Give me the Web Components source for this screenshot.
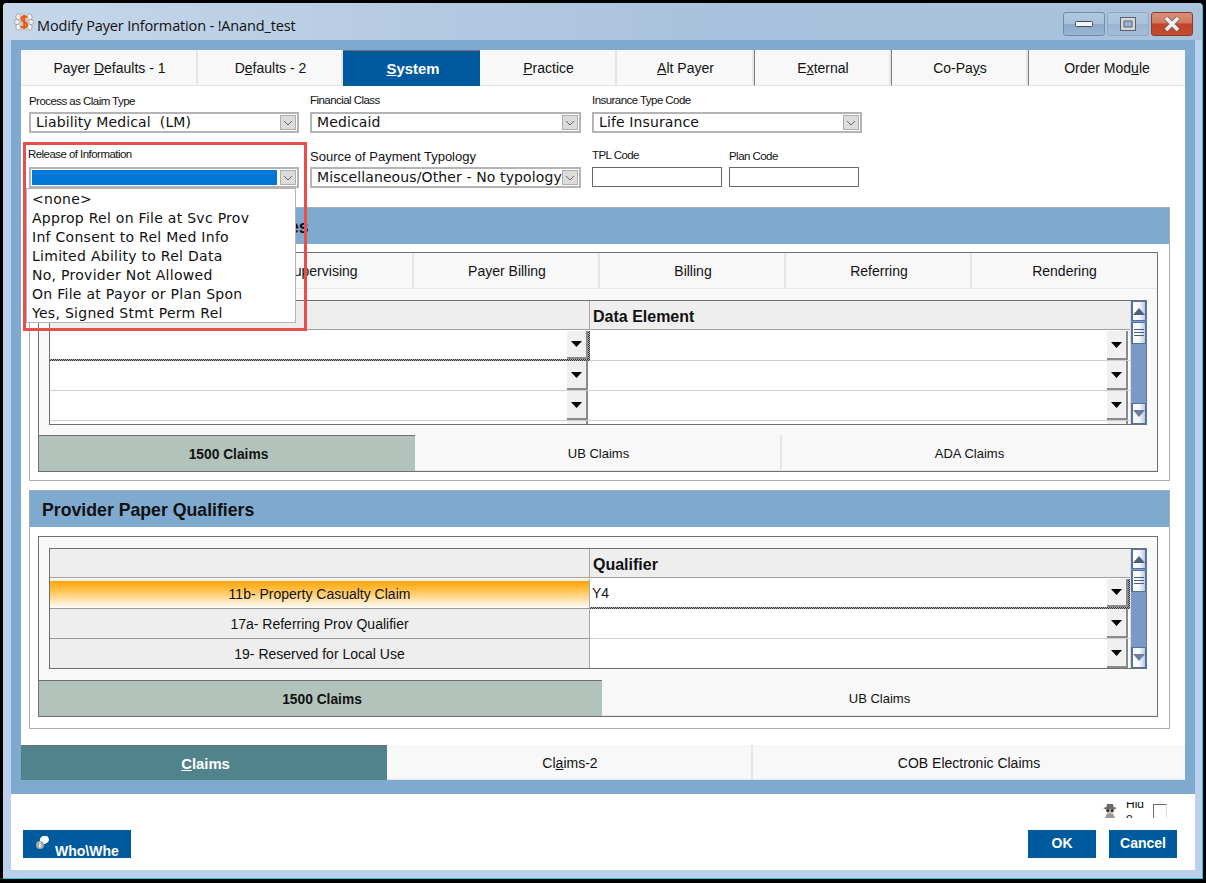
<!doctype html>
<html>
<head>
<meta charset="utf-8">
<title>Modify Payer Information</title>
<style>
  html, body { margin: 0; padding: 0; background: #000; height: 883px; overflow: hidden; }
  body { font-family: "Liberation Sans", Arial, sans-serif; }
</style>
</head>
<body>
<app-window caption="Modify Payer Information - !Anand_test">
  <tab-strip cols="177px 145px 137px 137px 137px 137px 137px 157px" height="36" size="14">
    <tab-item><span>Payer <u>D</u>efaults - 1</span></tab-item>
    <tab-item><span>D<u>e</u>faults - 2</span></tab-item>
    <tab-item active><span><u>S</u>ystem</span></tab-item>
    <tab-item><span><u>P</u>ractice</span></tab-item>
    <tab-item><span><u>A</u>lt Payer</span></tab-item>
    <tab-item dark><span>E<u>x</u>ternal</span></tab-item>
    <tab-item dark><span>Co-Pa<u>y</u>s</span></tab-item>
    <tab-item dark><span>Order Mod<u>u</u>le</span></tab-item>
  </tab-strip>

  <form-page>
    <form-field slot="r1" label="Process as Claim Type" lift="0"><combo-box value="Liability Medical  (LM)"></combo-box></form-field>
    <form-field slot="r1" label="Financial Class" lift="-1"><combo-box value="Medicaid"></combo-box></form-field>
    <form-field slot="r1" label="Insurance Type Code" lift="-1"><combo-box value="Life Insurance"></combo-box></form-field>

    <form-field slot="r2" label="Release of Information" lift="-2" nudge="-1"><combo-box selected></combo-box></form-field>
    <form-field slot="r2" label="Source of Payment Typology" size="13" spacing="0" lift="0"><combo-box value="Miscellaneous/Other - No typology" tight></combo-box></form-field>
    <div slot="r2" style="display:flex;gap:7px">
      <form-field label="TPL Code" lift="-1"><text-box></text-box></form-field>
      <form-field label="Plan Code" lift="0"><text-box></text-box></form-field>
    </div>

    <qual-section slot="sections" heading="es" indent="259" gap="8" after="8" style="margin-bottom:9px">
      <tab-strip cols="189px 186px 186px 186px 186px 185px" height="36" size="14">
        <tab-item></tab-item>
        <tab-item><span>Supervising</span></tab-item>
        <tab-item><span>Payer Billing</span></tab-item>
        <tab-item><span>Billing</span></tab-item>
        <tab-item><span>Referring</span></tab-item>
        <tab-item><span>Rendering</span></tab-item>
      </tab-strip>
      <data-grid title-right="Data Element" rows="4" height="125" focus="left" style="margin:11px 0 10px 10px"></data-grid>
      <tab-strip cols="376px 367px 375px" height="36" size="13" alt>
        <tab-item active><span>1500 Claims</span></tab-item>
        <tab-item><span>UB Claims</span></tab-item>
        <tab-item><span>ADA Claims</span></tab-item>
      </tab-strip>
    </qual-section>

    <qual-section slot="sections" heading="Provider Paper Qualifiers" indent="12" gap="9" after="11">
      <data-grid title-right="Qualifier" labels="11b- Property Casualty Claim|17a- Referring Prov Qualifier|19- Reserved for Local Use" value="Y4" rows="3" height="121" focus="right" style="margin:11px 0 11px 10px"></data-grid>
      <tab-strip cols="563px 555px" height="36" size="13" alt>
        <tab-item active><span>1500 Claims</span></tab-item>
        <tab-item><span>UB Claims</span></tab-item>
      </tab-strip>
    </qual-section>

    <drop-list slot="overlay" items="&lt;none&gt;|Approp Rel on File at Svc Prov|Inf Consent to Rel Med Info|Limited Ability to Rel Data|No, Provider Not Allowed|On File at Payor or Plan Spon|Yes, Signed Stmt Perm Rel"></drop-list>
    <annot-box slot="overlay"></annot-box>
  </form-page>

  <tab-strip cols="366px 366px 432px" height="35" size="14" teal>
    <tab-item active><span><u>C</u>laims</span></tab-item>
    <tab-item><span>Cl<u>a</u>ims-2</span></tab-item>
    <tab-item><span>COB Electronic Claims</span></tab-item>
  </tab-strip>

  <dialog-footer slot="footer"></dialog-footer>
</app-window>

<script>
class AppWindow extends HTMLElement {
  constructor() {
    super()
    this.attachShadow({ mode: 'open' })
  }

  connectedCallback() {
    this.shadowRoot.innerHTML = `
      <style>
        :host {
          display: flex;
          flex-direction: column;
          box-sizing: border-box;
          width: 1200px;
          height: 876px;
          margin: 3px 0 0 3px;
          background: #bad0ec;
          border-right: 1px solid #29c4e4;
          border-bottom: 1px solid #29c4e4;
          border-radius: 4px 4px 0 0;
        }
        .bar {
          display: flex;
          align-items: center;
          height: 37px;
          padding: 0 9px 0 11px;
          background: linear-gradient(90deg, #c6d7ea, #a8c1dc 60%, #a9c3dd);
          border-radius: 4px 4px 0 0;
        }
        .cap {
          flex: 1;
          margin: 7px 0 0 3px;
          font: 14.5px "Open Sans", "Noto Sans", sans-serif;
          letter-spacing: -0.15px;
          color: #111;
          white-space: nowrap;
        }
        .btn {
          box-sizing: border-box;
          width: 42px;
          height: 24px;
          margin: 4px 0 0 2px;
          display: flex;
          align-items: center;
          justify-content: center;
          border: 1px solid #6f8cad;
          border-radius: 3px;
          background: linear-gradient(180deg, #b2c8df 0, #a7bfd9 48%, #8ca9c9 52%, #9ab6d2 100%);
        }
        .btn.max { border-color: #8ea8c6; background: linear-gradient(180deg, #b0c7df 0, #a9c1da 48%, #9bb5d1 52%, #a4bdd8 100%); }
        .btn.close {
          border-color: #8a3a2a;
          background: linear-gradient(180deg, #dc8e78 0, #d07a62 45%, #c0432a 50%, #c5492f 100%);
        }
        .frame {
          display: flex;
          flex-direction: column;
          margin: 0 7px 0 8px;
          padding: 10px 10px 14px;
          height: 754px;
          box-sizing: border-box;
          background: #7faacf;
        }
        .foot { margin: 0 7px 0 8px; background: #fff; height: 76px; }
      </style>
      <div class="bar">
        <svg width="20" height="20" viewBox="0 0 20 20">
          <g fill="#f3f3f3" stroke="#8d8d8d" stroke-width=".7">
            <circle cx="5" cy="5" r="3.2"/><circle cx="15" cy="5" r="3.2"/><circle cx="5" cy="15" r="3.2"/><circle cx="15" cy="15" r="3.2"/>
            <circle cx="3" cy="10" r="2.6"/><circle cx="17" cy="10" r="2.6"/>
          </g>
          <rect x="5.5" y="1.5" width="9" height="17" fill="#c9c9c9"/>
          <path d="M13 5.5C12 4 7.5 4 7.5 7s5.5 3 5.5 6-5 3-6 1M10.2 3v14" fill="none" stroke="#e8590c" stroke-width="2"/>
        </svg>
        <div class="cap">${this.getAttribute('caption')}</div>
        <div class="btn">
          <svg width="18" height="8"><rect x=".5" y="1.5" width="17" height="5" rx="1" fill="#f4f4f4" stroke="#3d4b5c"/></svg>
        </div>
        <div class="btn max">
          <svg width="18" height="16"><rect x="1.5" y="1.5" width="15" height="13" fill="#d8d8d8" stroke="#55606c"/><rect x="5" y="5" width="8" height="6" fill="#9fb4cc" stroke="#55606c"/></svg>
        </div>
        <div class="btn close">
          <svg width="20" height="16" viewBox="0 0 20 16"><path d="M4 2l12 12M16 2L4 14" stroke="#6b6b6b" stroke-width="5"/><path d="M4 2l12 12M16 2L4 14" stroke="#efefef" stroke-width="3.4"/></svg>
        </div>
      </div>
      <div class="frame"><slot></slot></div>
      <div class="foot"><slot name="footer"></slot></div>
    `
  }
}

class TabStrip extends HTMLElement {
  constructor() {
    super()
    this.attachShadow({ mode: 'open' })
  }

  connectedCallback() {
    let activeBg = '#005a9e'
    let activeFg = '#fff'
    if (this.hasAttribute('alt')) {
      activeBg = '#b2c3bb'
      activeFg = '#111'
    }
    if (this.hasAttribute('teal')) {
      activeBg = '#50838b'
    }
    this.shadowRoot.innerHTML = `
      <style>
        :host {
          display: grid;
          flex: none;
          grid-template-columns: ${this.getAttribute('cols')};
          height: ${this.getAttribute('height')}px;
          font-size: ${this.getAttribute('size')}px;
          --active-bg: ${activeBg};
          --active-fg: ${activeFg};
        }
      </style>
      <slot></slot>
    `
  }
}

class TabItem extends HTMLElement {
  constructor() {
    super()
    this.attachShadow({ mode: 'open' })
  }

  connectedCallback() {
    this.shadowRoot.innerHTML = `
      <style>
        :host {
          display: flex;
          align-items: center;
          justify-content: center;
          box-sizing: border-box;
          background: #f8f8f8;
          color: #111;
          border-right: 2px solid #e6e6e6;
          border-bottom: 1px solid #e6e6e6;
          white-space: nowrap;
          padding: 1px 0 0 2px;
        }
        :host(:last-child) { border-right: 0; padding-left: 0; }
        :host([dark]) { border-left: 1px solid #7d7d7d; }
        :host([active]) {
          background: var(--active-bg);
          color: var(--active-fg);
          font-size: 1.06em;
          font-weight: bold;
          border: 0;
          border-top: 1px solid #707070;
          padding-left: 3px;
        }
      </style>
      <slot></slot>
    `
  }
}

class FormPage extends HTMLElement {
  constructor() {
    super()
    this.attachShadow({ mode: 'open' })
  }

  connectedCallback() {
    this.shadowRoot.innerHTML = `
      <style>
        :host {
          display: flex;
          flex-direction: column;
          position: relative;
          flex: 1;
          min-height: 0;
          background: #fff;
          padding: 0 16px 0 8px;
        }
        .row {
          display: grid;
          grid-template-columns: 270px 271px 270px;
          column-gap: 11px;
        }
        .r1 { height: 47px; margin-top: 7px; }
        .r2 { height: 59px; margin-top: 8px; }
      </style>
      <div class="row r1"><slot name="r1"></slot></div>
      <div class="row r2"><slot name="r2"></slot></div>
      <slot name="sections"></slot>
      <slot name="overlay"></slot>
    `
  }
}

class FormField extends HTMLElement {
  constructor() {
    super()
    this.attachShadow({ mode: 'open' })
  }

  connectedCallback() {
    let lift = this.getAttribute('lift') || 0
    let nudge = this.getAttribute('nudge') || 0
    let spacing = this.getAttribute('spacing') || -0.55
    this.shadowRoot.innerHTML = `
      <style>
        :host { display: block; }
        .lab {
          height: 19px;
          line-height: 17px;
          font-size: ${this.getAttribute('size') || 11.5}px;
          letter-spacing: ${spacing}px;
          white-space: nowrap;
          color: #111;
          transform: translate(${nudge}px, ${lift}px);
        }
      </style>
      <div class="lab">${this.getAttribute('label')}</div>
      <slot></slot>
    `
  }
}

class ComboBox extends HTMLElement {
  constructor() {
    super()
    this.attachShadow({ mode: 'open' })
  }

  connectedCallback() {
    let value = this.getAttribute('value') || ''
    this.shadowRoot.innerHTML = `
      <style>
        :host {
          display: flex;
          box-sizing: border-box;
          height: 21px;
          border: 2px solid #b4b4b4;
          background: #fff;
          padding: 1px;
        }
        .txt {
          flex: 1;
          min-width: 0;
          overflow: hidden;
          padding-left: 4px;
          margin-right: ${this.hasAttribute('tight') ? 0 : 3}px;
          font: 14px/15px "DejaVu Sans", sans-serif;
          letter-spacing: 0.12px;
          color: #111;
          white-space: pre;
        }
        :host([selected]) .txt { background: #0078d7; padding-left: 0; }
        .arr {
          flex: none;
          box-sizing: border-box;
          width: 16px;
          display: flex;
          align-items: center;
          justify-content: center;
          background: #dcdcdc;
          border: 1px solid #adadad;
        }
      </style>
      <div class="txt">${value}</div>
      <div class="arr"><svg width="10" height="6"><path d="M1 1l4 4 4-4" fill="none" stroke="#666"/></svg></div>
    `
  }
}

class TextBox extends HTMLElement {
  constructor() {
    super()
    this.attachShadow({ mode: 'open' })
  }

  connectedCallback() {
    this.shadowRoot.innerHTML = `
      <style>
        :host {
          display: block;
          box-sizing: border-box;
          width: 130px;
          height: 20px;
          background: #fff;
          border: 1px solid #6a6a6a;
        }
      </style>
    `
  }
}

class QualSection extends HTMLElement {
  constructor() {
    super()
    this.attachShadow({ mode: 'open' })
  }

  connectedCallback() {
    this.shadowRoot.innerHTML = `
      <style>
        :host {
          display: block;
          flex: none;
          box-sizing: border-box;
          border: 1px solid #acacac;
          background: #fff;
          width: 1141px;
        }
        .head {
          height: 36px;
          box-sizing: border-box;
          padding-left: ${this.getAttribute('indent')}px;
          background: #7faacf;
          font-size: 17.7px;
          font-weight: bold;
          line-height: 38px;
          color: #111;
          white-space: nowrap;
          overflow: hidden;
        }
        .pane {
          box-sizing: border-box;
          margin: ${this.getAttribute('gap')}px 11px ${this.getAttribute('after')}px 8px;
          width: 1120px;
          background: #f9f9f9;
          border: 1px solid #6f6f6f;
        }
      </style>
      <div class="head">${this.getAttribute('heading')}</div>
      <div class="pane"><slot></slot></div>
    `
  }
}

class DataGrid extends HTMLElement {
  constructor() {
    super()
    this.attachShadow({ mode: 'open' })
  }

  cell(side, index) {
    let labels = this.getAttribute('labels')
    let focused = this.getAttribute('focus') === side && index === 0
    let cls = focused ? 'cell focus' : 'cell'
    if (side === 'left' && labels) {
      let text = labels.split('|')[index]
      return `<div class="rowhead ${index === 0 ? 'hot' : ''}">${text}</div>`
    }
    let value = side === 'right' && index === 0 ? this.getAttribute('value') || '' : ''
    return `
      <div class="${cls}">
        <span class="val">${value}</span>
        <div class="drop"><svg width="11" height="6"><path d="M0 0h11L5.5 6z" fill="#000"/></svg></div>
      </div>`
  }

  connectedCallback() {
    let rows = +this.getAttribute('rows')
    let body = ''
    for (let i = 0; i < rows; i++) {
      body += this.cell('left', i) + this.cell('right', i)
    }
    this.shadowRoot.innerHTML = `
      <style>
        :host {
          display: flex;
          box-sizing: border-box;
          width: 1098px;
          height: ${this.getAttribute('height')}px;
          border: 1px solid #6f6f6f;
          border-right-color: #5d78a6;
          background: #fff;
          overflow: hidden;
        }
        .table {
          flex: none;
          width: 1080px;
          display: grid;
          grid-template-columns: 540px 540px;
          grid-auto-rows: 30px;
          align-content: start;
        }
        .top {
          box-sizing: border-box;
          height: 29px;
          background: #eee;
          border-bottom: 1px solid #a0a0a0;
          font-size: 16px;
          font-weight: bold;
          line-height: 31px;
          padding-left: 3px;
          color: #111;
          overflow: hidden;
        }
        .top.l { padding: 0; border-right: 1px solid #a8a8a8; }
        .cell {
          position: relative;
          box-sizing: border-box;
          display: flex;
          justify-content: space-between;
          background: #fff;
          border-bottom: 1px solid #cfcfcf;
        }
        .cell.focus { border-bottom: 0; padding-bottom: 2px; padding-right: 2px; }
        .cell.focus::before,
        .cell.focus::after {
          content: "";
          position: absolute;
          background: repeating-conic-gradient(#333 0 25%, #aaa 0 50%) 0 0 / 2px 2px;
        }
        .cell.focus::before { right: 0; top: 0; bottom: 0; width: 2px; }
        .cell.focus::after { left: 0; right: 0; bottom: 0; height: 2px; }
        .cell.focus .drop { margin-right: 0; height: 28px; }
        .val { padding: 6px 0 0 2px; font-size: 14px; color: #111; }
        .drop {
          box-sizing: border-box;
          width: 21px;
          height: 29px;
          margin-right: 2px;
          display: flex;
          align-items: center;
          justify-content: center;
          background: #f0f0f0;
          border-right: 2px solid #8a8a8a;
          border-bottom: 2px solid #8a8a8a;
        }
        .rowhead {
          box-sizing: border-box;
          text-align: center;
          line-height: 30px;
          font-size: 14px;
          color: #111;
          background: #eee;
          border-bottom: 1px solid #9a9a9a;
          border-right: 1px solid #a8a8a8;
        }
        .rowhead.hot {
          background: linear-gradient(180deg, #eee 0 2px, #ffa50a 2px, #ffb833 30%, #fff 100%);
        }
        grid-scroll { flex: 1; }
      </style>
      <div class="table">
        <div class="top l"></div>
        <div class="top">${this.getAttribute('title-right')}</div>
        ${body}
      </div>
      <grid-scroll></grid-scroll>
    `
  }
}

class GridScroll extends HTMLElement {
  constructor() {
    super()
    this.attachShadow({ mode: 'open' })
  }

  connectedCallback() {
    this.shadowRoot.innerHTML = `
      <style>
        :host {
          display: flex;
          flex-direction: column;
          background: #7a9ac4;
          border-left: 1px solid #d4e0f0;
          box-sizing: border-box;
        }
        .b {
          box-sizing: border-box;
          height: 20px;
          display: flex;
          align-items: center;
          justify-content: center;
          background: linear-gradient(90deg, #fff, #f2f5fa 55%, #bccbe0);
          border: 1px solid #56709f;
          border-left-width: 2px;
        }
        .thumb { height: 22px; margin: 1px 0 auto; }
        .down { height: 21px; }
      </style>
      <div class="b"><svg width="12" height="7"><path d="M6 0l6 7H0z" fill="#4f5d7c"/></svg></div>
      <div class="b thumb"><svg width="10" height="8"><path d="M0 .5h10M0 3.5h10M0 6.5h10" stroke="#4f5d7c"/></svg></div>
      <div class="b down"><svg width="12" height="7"><path d="M0 0h12L6 7z" fill="#6f7c98"/></svg></div>
    `
  }
}

class DropList extends HTMLElement {
  constructor() {
    super()
    this.attachShadow({ mode: 'open' })
  }

  connectedCallback() {
    let items = this.getAttribute('items').split('|')
    let html = items
      .map((text) => `<div>${text.replace(/</g, '&lt;')}</div>`)
      .join('')
    this.shadowRoot.innerHTML = `
      <style>
        :host {
          position: absolute;
          left: 5px;
          top: 102px;
          box-sizing: border-box;
          width: 270px;
          height: 135px;
          padding: 1px 0 0 5px;
          background: #fff;
          border: 1px solid #b4b4b4;
          font: 14px/19px "DejaVu Sans", sans-serif;
          letter-spacing: 0.28px;
          color: #111;
          white-space: nowrap;
        }
        div:first-child { padding-left: 1px; }
      </style>
      ${html}
    `
  }
}

class AnnotBox extends HTMLElement {
  constructor() {
    super()
    this.attachShadow({ mode: 'open' })
  }

  connectedCallback() {
    this.shadowRoot.innerHTML = `
      <style>
        :host {
          position: absolute;
          left: 2px;
          top: 56px;
          box-sizing: border-box;
          width: 284px;
          height: 189px;
          border: 3px solid #e94e4a;
        }
      </style>
    `
  }
}

class DialogFooter extends HTMLElement {
  constructor() {
    super()
    this.attachShadow({ mode: 'open' })
  }

  connectedCallback() {
    this.shadowRoot.innerHTML = `
      <style>
        :host {
          display: flex;
          flex-direction: column;
          box-sizing: border-box;
          height: 76px;
          padding: 10px 18px 12px 12px;
        }
        .top {
          display: flex;
          justify-content: flex-end;
          height: 14px;
          margin-bottom: 12px;
          margin-right: 10px;
        }
        .hide {
          width: 19px;
          height: 16px;
          margin: -2px 8px 0 9px;
          overflow: hidden;
          font-size: 12px;
          line-height: 14px;
          word-break: break-all;
          color: #111;
        }
        .hide span { display: block; margin-top: -5px; }
        .chk {
          box-sizing: border-box;
          width: 14px;
          height: 14px;
          border-top: 1px solid #6e6e6e;
          border-left: 1px solid #6e6e6e;
          border-right: 1px solid #ddd;
        }
        .bot { display: flex; align-items: flex-start; }
        .btn {
          box-sizing: border-box;
          width: 68px;
          height: 28px;
          background: #005a9e;
          color: #fff;
          font-size: 14px;
          font-weight: bold;
          text-align: center;
          line-height: 26px;
        }
        .who {
          width: 108px;
          margin-right: auto;
          display: flex;
          overflow: hidden;
          padding: 6px 0 0 12px;
          text-align: left;
          line-height: 16px;
          white-space: nowrap;
        }
        .who svg { margin: 0 4px 0 0; flex: none; }
        .who span { margin-top: 7px; }
        .ok { margin-right: 13px; }
      </style>
      <div class="top">
        <svg width="14" height="14" viewBox="0 0 14 14">
          <path d="M0 4l3.5-1L4 0h6l.5 3L14 4l-3 1.5H3z" fill="#6a6a6a"/>
          <path d="M3.5 5.5h7v3L7 10 3.5 8.5z" fill="#d0b8a6"/>
          <circle cx="4.8" cy="6.5" r="1.6" fill="#333"/>
          <circle cx="9.2" cy="6.5" r="1.6" fill="#333"/>
          <path d="M2 14l2-4.5h6L12 14z" fill="#9a9a9a"/>
        </svg>
        <div class="hide"><span>Hide</span></div>
        <div class="chk"></div>
      </div>
      <div class="bot">
        <div class="btn who">
          <svg width="16" height="16" viewBox="0 0 16 16">
            <rect x="5" y="0" width="9" height="8" rx="4" fill="#fff" transform="rotate(-35 9 4)"/>
            <circle cx="5" cy="9" r="4" fill="#a9a9a9"/>
            <rect x="4.3" y="8" width="1.4" height="3.5" fill="#fff"/>
            <rect x="4.3" y="6" width="1.4" height="1.2" fill="#fff"/>
          </svg>
          <span>Who\\Whe</span>
        </div>
        <div class="btn ok">OK</div>
        <div class="btn">Cancel</div>
      </div>
    `
  }
}

customElements.define('app-window', AppWindow)
customElements.define('tab-strip', TabStrip)
customElements.define('tab-item', TabItem)
customElements.define('form-page', FormPage)
customElements.define('form-field', FormField)
customElements.define('combo-box', ComboBox)
customElements.define('text-box', TextBox)
customElements.define('qual-section', QualSection)
customElements.define('data-grid', DataGrid)
customElements.define('grid-scroll', GridScroll)
customElements.define('drop-list', DropList)
customElements.define('annot-box', AnnotBox)
customElements.define('dialog-footer', DialogFooter)
</script>
</body>
</html>
